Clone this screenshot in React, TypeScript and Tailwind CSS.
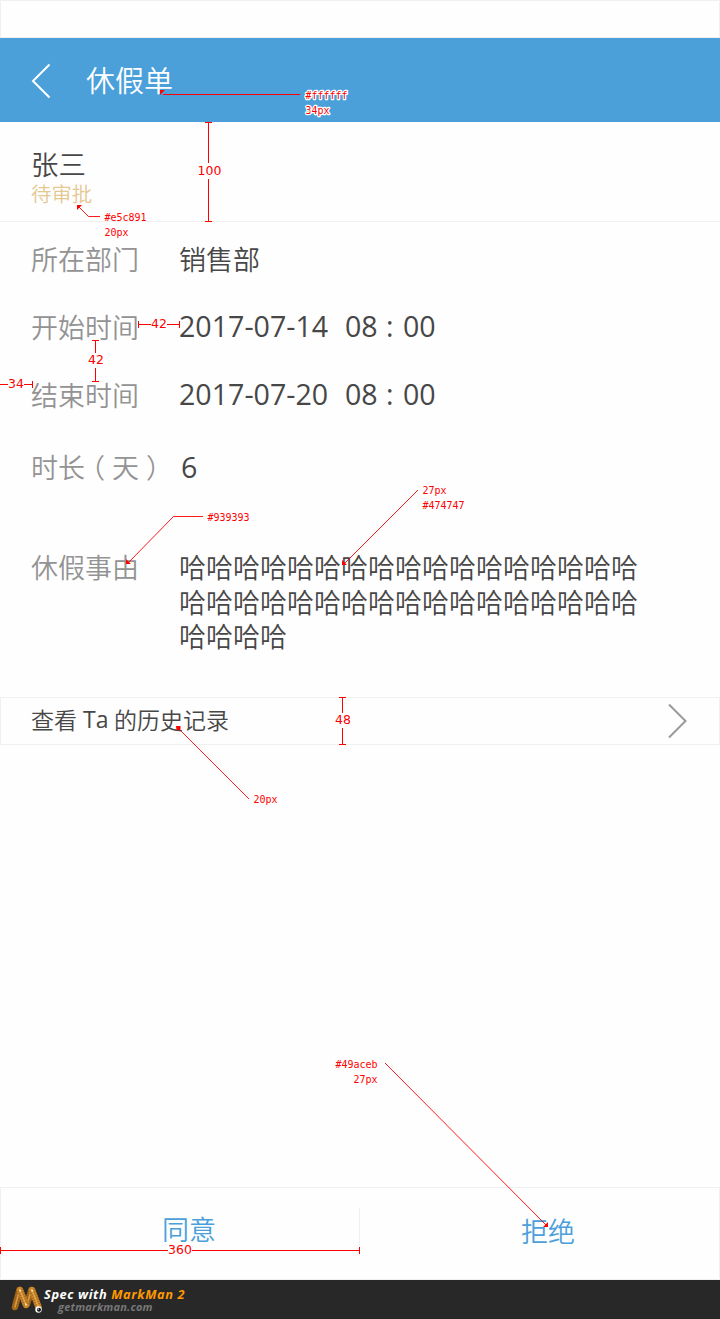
import type { ReactNode } from "react";

const CJK = "font-['Noto_Sans_CJK_SC',sans-serif] font-[350]";
const EDGE = "border-[#f0f0f0]";

function Row({ label, children, className }: { label: ReactNode; children: ReactNode; className: string }) {
  return (
    <div className={`flex items-center pl-[31px] text-[27px] ${className}`}>
      <div className="w-[148px] shrink-0 whitespace-nowrap text-[#939393]">{label}</div>
      <div className="whitespace-nowrap text-[#474747]">{children}</div>
    </div>
  );
}

function Moment({ date, hour, minute }: { date: string; hour: string; minute: string }) {
  return (
    <div className="-mt-px flex font-['Open_Sans',sans-serif] text-[28.6px] font-normal">
      <span className="w-[166px]">{date}</span>
      <span className="w-[41px]">{hour}</span>
      <span className="w-[17px]">:</span>
      <span>{minute}</span>
    </div>
  );
}

function Size({ d, x, y, label, width }: { d: string; x: number; y: number; label: string; width: number }) {
  return (
    <g>
      <path d={d} stroke="#f00" fill="none" shapeRendering="crispEdges" />
      <text x={x} y={y} textLength={width} fontSize="12.5" className="font-['DejaVu_Sans',sans-serif] font-normal">{label}</text>
    </g>
  );
}

function Note({ x, y, label, halo }: { x: number; y: number; label: string; halo?: boolean }) {
  return (
    <text
      x={x}
      y={y}
      fontSize="10"
      textLength={label.length * 6}
      stroke={halo ? "#fff" : "none"}
      strokeWidth={halo ? 2.5 : 0}
      strokeLinejoin="round"
      style={{ paintOrder: "stroke" }}
      className="font-['DejaVu_Sans_Mono',monospace] font-normal"
    >
      {label}
    </text>
  );
}

function Annotations() {
  return (
    <svg className="pointer-events-none absolute inset-0" width="720" height="1319" viewBox="0 0 720 1319" fill="#f00">
      <g stroke="#f00" strokeWidth="0.9" fill="none">
        <path d="M163 94.5H300" strokeWidth="1" />
        <path d="M79 207L88.5 216.5H100" />
        <path d="M128 563L173.5 516.5H203" />
        <path d="M344 564L418 490" />
        <path d="M178 728L249 799" />
        <path d="M385 1063L546 1225" />
      </g>
      <path d="M160 90h5l-5 5zM77 205h5l-5 5zM126 559v5h5zM342 560v5h5zM176 726h4.5v4h-4zM548 1222v5h-5z" />
      <Size d="M205 122.5H212M208.500 122V163M208.500 179V222M205 221.500H212" x={197.500} y={175} label="100" width={24} />
      <Size d="M138.500 321V328M138 324.500H151M167 324.500H180M179.500 321V328" x={151} y={328} label="42" width={16} />
      <Size d="M92 340.500H99M95.500 340V353M95.500 368V382M92 381.500H99" x={88} y={364} label="42" width={16} />
      <Size d="M0 384.500H8M24 384.500H33M32.500 381V388" x={8} y={388} label="34" width={16} />
      <Size d="M339 697.500H346M342.500 697V713M342.500 728V745M339 744.500H346" x={335} y={724} label="48" width={16} />
      <Size d="M.5 1247V1254M0 1250.500H168M192 1250.500H360M359.500 1247V1254" x={168} y={1254} label="360" width={24} />
      <Note x={305.500} y={99} label="#ffffff" halo />
      <Note x={305.500} y={114} label="34px" halo />
      <Note x={104.500} y={221} label="#e5c891" />
      <Note x={104.500} y={236} label="20px" />
      <Note x={207.500} y={521} label="#939393" />
      <Note x={422.500} y={494} label="27px" />
      <Note x={422.500} y={509} label="#474747" />
      <Note x={253.500} y={803} label="20px" />
      <Note x={335.500} y={1068} label="#49aceb" />
      <Note x={353.500} y={1083} label="27px" />
    </svg>
  );
}

const WORMS = ["M5 23L9.500 6", "M17 20L21.500 6", "M10 6L16 21", "M22 6L28.500 23"];

function Logo() {
  return (
    <svg className="shrink-0" width="34" height="32" viewBox="0 0 34 32" fill="none">
      {WORMS.map((d, i) => (
        <g key={d}>
          <path d={d} stroke={i < 2 ? "#a9691c" : "#cb852a"} strokeWidth="6.500" strokeLinecap="round" />
          <path d={d} stroke="#7d480f" strokeWidth="6.500" strokeDasharray="0.8 1.700" opacity="0.55" />
          <path d={d} stroke="#eeb45a" strokeWidth="1.600" strokeLinecap="round" opacity="0.7" />
        </g>
      ))}
      <path d="M10 6.500h.1M22 6.500h.1M16 20.500h.1" stroke="#ffe9a8" strokeWidth="2" strokeLinecap="round" />
      <circle cx="28.500" cy="25.500" r="3.200" fill="#fff" />
      <circle cx="29" cy="25.800" r="2" fill="#111" />
      <circle cx="28.300" cy="25.200" r="0.600" fill="#fff" />
    </svg>
  );
}

export default function App() {
  return (
    <div className={`relative flex h-[1319px] w-[720px] flex-col overflow-hidden bg-[#fefefe] ${CJK}`}>
      <div className={`h-[38px] shrink-0 border ${EDGE}`} />
      <header className="flex h-[84px] shrink-0 items-center bg-[#4ba0da] pl-[31px] text-white">
        <svg className="mt-0.5" width="20" height="36" viewBox="0 0 20 36" fill="none" stroke="currentColor" strokeWidth="2">
          <path d="M18.500 1.500L2 18L18.500 34.500" />
        </svg>
        <h1 className="-mt-[3px] ml-[35px] text-[29px] leading-[42px]">休假单</h1>
      </header>
      <section className={`h-[100px] shrink-0 border-b pt-[25px] pl-[31px] ${EDGE}`}>
        <div className="text-[27.400px] leading-8 text-[#474747]">张三</div>
        <div className="text-[20.400px] leading-7 text-[#e5c891]">待审批</div>
      </section>
      <main className="h-[475px] shrink-0 pt-[3px]">
        <Row label="所在部门" className="h-[68px]">销售部</Row>
        <Row label="开始时间" className="h-[68px]"><Moment date="2017-07-14" hour="08" minute="00" /></Row>
        <Row label="结束时间" className="h-[68px]"><Moment date="2017-07-20" hour="08" minute="00" /></Row>
        <Row
          label={<>时长<span className="-ml-[7px] mr-[7px]">（</span>天<span className="ml-[7px]">）</span></>}
          className="h-[76px]"
        >
          <span className="ml-0.5 font-['Open_Sans',sans-serif] text-[28.600px] font-normal">6</span>
        </Row>
        <div className="flex pl-[31px] pt-[45px] text-[27px] leading-[34.500px]">
          <div className="w-[148px] shrink-0 text-[#939393]">休假事由</div>
          <p className="w-[460px] break-all text-[#474747]">{"哈".repeat(38)}</p>
        </div>
      </main>
      <div className={`flex h-12 shrink-0 items-center justify-between border pl-[30px] pr-8 text-[23px] text-[#474747] ${EDGE}`}>
        <div className="-mt-1 flex leading-[40px]">
          <span>查看</span>
          <span className="w-[37px] pl-[6px] font-['Open_Sans',sans-serif] font-normal">Ta</span>
          <span>的历史记录</span>
        </div>
        <svg width="19" height="36" viewBox="0 0 19 36" fill="none" stroke="#999" strokeWidth="2">
          <path d="M1 1.500L17.500 18L1 34.500" />
        </svg>
      </div>
      <div className="flex-1" />
      <div className={`flex h-[93px] shrink-0 items-start border pt-5 text-[27px] leading-none text-[#4ba0da] ${EDGE}`}>
        <div className={`h-12 w-[359px] border-r pl-[161px] pt-[7px] ${EDGE}`}>同意</div>
        <div className="h-12 pl-[161px] pt-[9px]">拒绝</div>
      </div>
      <footer className="flex h-[39px] shrink-0 bg-[#282828] pl-[10px] pt-1 font-['Open_Sans',sans-serif] font-bold italic">
        <Logo />
        <div className="whitespace-nowrap pt-[3px]">
          <div className="text-[12.800px] leading-[14px] tracking-[0.6px] text-white">
            Spec with <span className="text-[#f90]">MarkMan 2</span>
          </div>
          <div className="pl-[14px] text-[11px] leading-[11px] tracking-[0.2px] text-[#777]">getmarkman.com</div>
        </div>
      </footer>
      <Annotations />
    </div>
  );
}
